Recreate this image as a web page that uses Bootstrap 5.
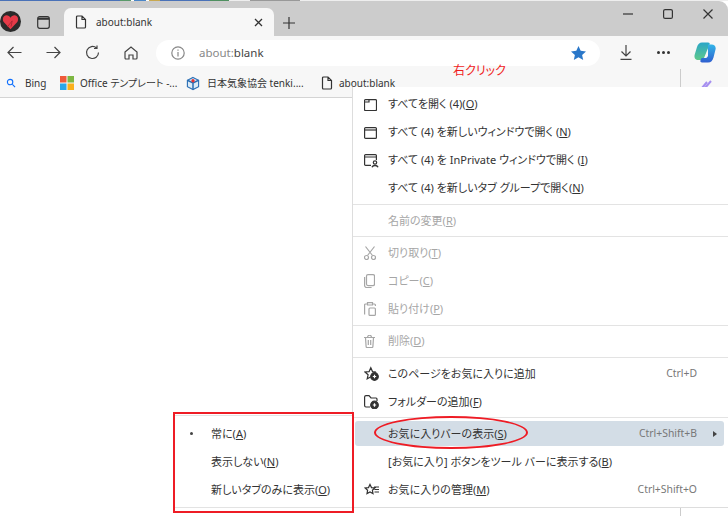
<!DOCTYPE html>
<html lang="ja">
<head>
  <meta charset="UTF-8" />
  <title>about:blank</title>
  <link href="https://cdn.jsdelivr.net/npm/bootstrap@5.3.0/dist/css/bootstrap.min.css" rel="stylesheet" />
  <style>
    html, body { width: 728px; height: 516px; overflow: hidden; background: #fff; }
    body { position: relative; font-family: "Noto Sans", "Noto Sans CJK JP", sans-serif; font-size: 11px; color: #333; font-feature-settings: "palt"; }
    svg { display: block; fill: none; stroke: currentColor; stroke-width: 1.2; }
    .strip { height: 1px; background: linear-gradient(90deg, #4a72b8 0 120px, #5a9a6a 120px 131px, #fff 131px 134px, #4a86c8 134px 146px, #fff 146px 149px, #c8a850 149px 160px, #4a72b8 160px 210px, #4f9060 210px 229px, #eee 229px 250px, #999 250px 300px, #eee 300px); }
    .titlebar { height: 35px; background: #ccc; border-top-right-radius: 9px; padding-top: 7px; }
    .avatar { width: 21px; height: 21px; margin-top: 3px; border-radius: 50%; background: #2b2b2b; }
    .tabtoggle { width: 43px; padding: 8px 0 0 2px; }
    .tabitem { width: 210px; height: 28px; background: #f7f7f7; border-radius: 7px 7px 0 0; padding: 0 11px; font-size: 10px; }
    .tabname { margin-left: 9px; }
    .tabplus { width: 30px; padding-top: 9px; }
    .winbtns { margin-top: 1px; }
    .winbtns span { width: 40px; }
    .toolbar { height: 33px; background: #f7f7f7; padding-left: 7px; color: #444; }
    .navbtn { width: 39px; }
    .navbtn.lastnav { width: 32px; }
    .addressbar { width: 444px; height: 26px; background: #fff; border-radius: 13px; padding: 0 14px 0 15px; color: #888; font-size: 11.5px; }
    .addressbar b { font-weight: 400; color: #444; }
    .addrtext { margin-left: 14px; }
    .dlbtn { width: 37px; margin-left: 20px; }
    .morebtn { width: 37px; gap: 2px; }
    .morebtn i { display: block; width: 3px; height: 3px; border-radius: 50%; background: #333; }
    .favbar { height: 29px; background: #f7f7f7; border-bottom: 1px solid #d4d4d4; padding-left: 6px; font-size: 10px; }
    .favitem { white-space: nowrap; }
    .favbing { width: 35px; margin-left: 9px; }
    .favoffice { width: 106px; margin-left: 6px; }
    .favtenki { width: 114px; margin-left: 7px; }
    .favblank { margin-left: 6px; }
    .sidepane { position: absolute; left: 680px; top: 69px; bottom: 0; width: 48px; border-left: 1px solid #ccc; padding: 10px 0 0 20px; color: #a68ff0; }
    .redlabel { position: absolute; left: 453px; top: 63px; color: #f01d1d; font-size: 12px; line-height: 16px; }
    .ctx { position: absolute; left: 352px; top: 87px; width: 376px; height: 421px; background: #fff; border-left: 1px solid #ddd; border-bottom: 1px solid #ddd; padding-top: 3px; }
    .ctxrow { height: 28px; padding: 1px 28px 0 11px; margin-right: 3px; white-space: nowrap; }
    .ctxicon { width: 24px; flex: none; }
    .ctxrow.off { color: #a6a6a6; }
    .ctxrow .keys { margin-left: auto; color: #777; font-size: 10.4px; }
    .ctxrow.hot { height: 25px; margin: 3px 4px 1.5px 2px; padding: 0 7px 0 9px; background: #d3dde6; border-radius: 3px; }
    .ctxrow.hot ~ .ctxrow { padding-top: 0; }
    .ctxline { height: 1px; background: #e3e3e3; margin: 2px 0 1.33px 0; }
    .ctxrow u { text-underline-offset: 1px; }
    .arrow { width: 0; height: 0; border-left: 4px solid #444; border-top: 3px solid transparent; border-bottom: 3px solid transparent; margin-left: 16px; }
    .submenu { position: absolute; left: 173px; top: 412px; width: 181px; height: 101px; border: 2px solid #ee1c25; padding: 1px 0; }
    .subinner { height: 93px; border-top: 1px solid #e3e3e3; border-bottom: 1px solid #e3e3e3; padding-top: 4px; background: #fff; }
    .submenu .ctxrow { padding: 0 0 0 36px; margin: 0; position: relative; }
    .dot { position: absolute; left: 15px; top: 12px; width: 3px; height: 3px; border-radius: 50%; background: #444; }
    .ringmark { position: absolute; left: 374px; top: 416px; width: 154px; height: 33px; border: 2px solid #ee1c25; border-radius: 50%; }
  </style>
</head>
<body>
  <div class="strip"></div>
  <div class="titlebar d-flex align-items-start">
    <div class="avatar d-flex align-items-center justify-content-center">
      <svg width="17" height="16" viewBox="0 0 15 14"><path d="M7.500 13.500 1.500 7C0 4.500 1 1 4 1c1.500 0 2.800 1 3.500 2.200C8.200 2 9.500 1 11 1c3 0 4 3.500 2.500 6Z" fill="#e63a48" stroke="none"/><path d="M5 11 9 6l-1 5" stroke="#a92633" stroke-width=".8"/></svg>
    </div>
    <div class="tabtoggle d-flex justify-content-center">
      <svg width="13" height="13" viewBox="0 0 13 13"><rect x=".7" y=".7" width="11.600" height="11.600" rx="2"/><path d="M1 2.700h11" stroke-width="2.200"/></svg>
    </div>
    <div class="tabitem d-flex align-items-center">
      <svg width="12" height="14" viewBox="0 0 12 14"><path d="M2.500 1h4.500l3.500 3.500v7.500a1 1 0 0 1-1 1h-7a1 1 0 0 1-1-1v-10a1 1 0 0 1 1-1ZM7 1v3.500h3.500"/></svg>
      <span class="tabname">about:blank</span>
      <svg class="ms-auto" width="9" height="9" viewBox="0 0 9 9"><path d="M1 1l7 7M8 1 1 8" stroke-width="1.300"/></svg>
    </div>
    <div class="tabplus d-flex justify-content-center">
      <svg width="12" height="12" viewBox="0 0 12 12"><path d="M6 0v12M0 6h12"/></svg>
    </div>
    <div class="winbtns d-flex ms-auto">
      <span class="d-flex justify-content-center"><svg width="10" height="10" viewBox="0 0 10 10"><path d="M0 5h10"/></svg></span>
      <span class="d-flex justify-content-center"><svg width="10" height="10" viewBox="0 0 10 10"><rect x=".6" y=".6" width="8.800" height="8.800" rx="1.500"/></svg></span>
      <span class="d-flex justify-content-center"><svg width="10" height="10" viewBox="0 0 10 10"><path d="M.5.500l9 9M9.500.500l-9 9"/></svg></span>
    </div>
  </div>

  <div class="toolbar d-flex align-items-center">
    <div class="navbtn"><svg width="15" height="13" viewBox="0 0 15 13"><path d="M14.500 6.500H1M6.500 1 1 6.500 6.500 12"/></svg></div>
    <div class="navbtn"><svg width="15" height="13" viewBox="0 0 15 13"><path d="M.5 6.500H14M8.500 1 14 6.500 8.500 12"/></svg></div>
    <div class="navbtn"><svg width="15" height="15" viewBox="0 0 15 15"><path d="M13.500 7.500a6 6 0 1 1-2-4.500M12 .5V3.500H9"/></svg></div>
    <div class="navbtn lastnav"><svg width="14" height="14" viewBox="0 0 14 14"><path d="M1 6 7 1l6 5v6a1 1 0 0 1-1 1H9V9H5v4H2a1 1 0 0 1-1-1Z"/></svg></div>
    <div class="addressbar d-flex align-items-center">
      <svg width="14" height="14" viewBox="0 0 14 14" stroke="#888"><circle cx="7" cy="7" r="6.200"/><path d="M7 6v4.500M7 3.500v1.200"/></svg>
      <span class="addrtext">about:<b>blank</b></span>
      <svg class="ms-auto" width="15" height="14" viewBox="0 0 15 14"><path d="M7.500 0l2.200 4.800 5.300.6-3.900 3.500 1.100 5.100-4.700-2.700L2.800 14l1.100-5.100L0 5.400l5.300-.6Z" fill="#2a77c9" stroke="none"/></svg>
    </div>
    <div class="dlbtn"><svg width="12" height="15" viewBox="0 0 12 15"><path d="M6 0v10.500M1.500 6.500 6 11l4.500-4.500M.5 14.300h11"/></svg></div>
    <div class="morebtn d-flex"><i></i><i></i><i></i></div>
    <svg width="22" height="21" viewBox="0 0 22 21">
      <defs>
        <linearGradient id="copa" x1="0" y1="0" x2="0" y2="1"><stop offset="0" stop-color="#2aa6c8"/><stop offset="1" stop-color="#5fc98a"/></linearGradient>
        <linearGradient id="copb" x1="0" y1="0" x2="0" y2="1"><stop offset="0" stop-color="#33b5e8"/><stop offset="1" stop-color="#2f5fd0"/></linearGradient>
      </defs>
      <path d="M8 .5h6c1.500 0 2 .8 1.500 2L10 16c-.6 1.500-1.500 2-3 2H4.500C1.500 18 0 16 .6 13L3 5C4 2 5.500.5 8 .5Z" fill="url(#copa)" stroke="none"/>
      <path d="M14 2.500h3.500c3 0 4.800 2 4 5l-2 8c-.8 3-2.500 5-5.500 5H8c-1.500 0-2-1-1.500-2.300L7.500 16h3.500c1.500 0 2.500-.8 3-2.300Z" fill="url(#copb)" stroke="none"/>
    </svg>
  </div>

  <div class="favbar d-flex align-items-center">
    <svg width="10" height="10" viewBox="0 0 11 11" class="text-primary" stroke-width="2"><circle cx="4.500" cy="4.500" r="3"/><path d="M7 7l3 3"/></svg>
    <span class="favitem favbing">Bing</span>
    <svg width="14" height="14" viewBox="0 0 14 14"><rect width="6.500" height="6.500" fill="#ef5a3a" stroke="none"/><rect x="7.500" width="6.500" height="6.500" fill="#7db742" stroke="none"/><rect y="7.500" width="6.500" height="6.500" fill="#2ba6ea" stroke="none"/><rect x="7.500" y="7.500" width="6.500" height="6.500" fill="#fab01c" stroke="none"/></svg>
    <span class="favitem favoffice">Office テンプレート -...</span>
    <svg width="14" height="15" viewBox="0 0 15 15"><path d="M7.500 1l6 3v7l-6 3-6-3V4Z" fill="#dcebf7" stroke="#2b6fb5"/><path d="M1.500 4l6 3 6-3M7.500 7v7" stroke="#2b6fb5" stroke-width="1.600"/><circle cx="7.500" cy="4.500" r="1.800" fill="#e23333" stroke="none"/></svg>
    <span class="favitem favtenki">日本気象協会 tenki....</span>
    <svg width="12" height="14" viewBox="0 0 12 14"><path d="M2.500 1h4.500l3.500 3.500v7.500a1 1 0 0 1-1 1h-7a1 1 0 0 1-1-1v-10a1 1 0 0 1 1-1ZM7 1v3.500h3.500"/></svg>
    <span class="favitem favblank">about:blank</span>
  </div>

  <div class="sidepane">
    <svg width="11" height="10" viewBox="0 0 11 10"><path d="M1 9 6 3M4 9l6-7" stroke-width="2"/></svg>
  </div>

  <div class="redlabel">右クリック</div>

  <div class="ctx">
    <div class="ctxrow d-flex align-items-center"><span class="ctxicon"><svg width="13" height="12" viewBox="0 0 13 12"><path d="M1.500.6h10a1 1 0 0 1 1 1v9a1 1 0 0 1-1 1h-10a1 1 0 0 1-1-1v-9a1 1 0 0 1 1-1ZM.6 3h4.400V.6"/></svg></span>すべてを開く (4)(<u>O</u>)</div>
    <div class="ctxrow d-flex align-items-center"><span class="ctxicon"><svg width="13" height="12" viewBox="0 0 13 12"><rect x=".6" y=".6" width="11.800" height="10.800" rx="1"/><path d="M.6 3h11.800"/></svg></span>すべて (4) を新しいウィンドウで開く (<u>N</u>)</div>
    <div class="ctxrow d-flex align-items-center"><span class="ctxicon"><svg width="15" height="14" viewBox="0 0 15 14"><path d="M7 11.400H1.600a1 1 0 0 1-1-1V1.600a1 1 0 0 1 1-1h9.800a1 1 0 0 1 1 1V6M.6 3h11.800"/><circle cx="11" cy="8.500" r="1.700"/><path d="M8 13.300c1-2.400 5-2.400 6 0" stroke-width="1.500"/></svg></span>すべて (4) を InPrivate ウィンドウで開く (<u>I</u>)</div>
    <div class="ctxrow d-flex align-items-center"><span class="ctxicon"></span>すべて (4) を新しいタブ グループで開く(<u>N</u>)</div>
    <div class="ctxline"></div>
    <div class="ctxrow off d-flex align-items-center"><span class="ctxicon"></span>名前の変更(<u>R</u>)</div>
    <div class="ctxline"></div>
    <div class="ctxrow off d-flex align-items-center"><span class="ctxicon"><svg width="12" height="14" viewBox="0 0 12 14"><path d="M1.500.5l7 9M10.500.5l-7 9"/><circle cx="2.500" cy="11.500" r="2"/><circle cx="9.500" cy="11.500" r="2"/></svg></span>切り取り(<u>T</u>)</div>
    <div class="ctxrow off d-flex align-items-center"><span class="ctxicon"><svg width="11" height="14" viewBox="0 0 11 14"><rect x="2.500" y=".6" width="8" height="11" rx="1.500"/><path d="M.6 3v8.500a2 2 0 0 0 2 2h5"/></svg></span>コピー(<u>C</u>)</div>
    <div class="ctxrow off d-flex align-items-center"><span class="ctxicon"><svg width="12" height="14" viewBox="0 0 12 14"><path d="M3 2H1.600a1 1 0 0 0-1 1v9.400M9 2h1.400a1 1 0 0 1 1 1v1M3.500.6h5v2.400h-5Z"/><rect x="5" y="6" width="6.400" height="7.400" rx="1"/></svg></span>貼り付け(<u>P</u>)</div>
    <div class="ctxline"></div>
    <div class="ctxrow off d-flex align-items-center"><span class="ctxicon"><svg width="11" height="13" viewBox="0 0 11 13"><path d="M0 2.500h11M3.500 2.500c0-3 4-3 4 0M1.500 2.500l.6 9a1 1 0 0 0 1 1h4.800a1 1 0 0 0 1-1l.6-9M4.300 5v5M6.700 5v5"/></svg></span>削除(<u>D</u>)</div>
    <div class="ctxline"></div>
    <div class="ctxrow d-flex align-items-center"><span class="ctxicon"><svg width="15" height="15" viewBox="0 0 15 15"><path d="M6.500 11 3.200 12.800l.9-4L1 6l4.100-.4L6.800 1.800l1.700 3.800 3.500.4"/><circle cx="10.500" cy="10.500" r="3.800" fill="currentColor"/><path d="M10.500 8.800v3.400M8.800 10.500h3.400" stroke="#fff"/></svg></span>このページをお気に入りに追加<span class="keys">Ctrl+D</span></div>
    <div class="ctxrow d-flex align-items-center"><span class="ctxicon"><svg width="15" height="14" viewBox="0 0 15 14"><path d="M6 12H2a1.500 1.500 0 0 1-1.400-1.500V2A1.500 1.500 0 0 1 2 .6h3L7 3h5a1.500 1.500 0 0 1 1 1v2"/><circle cx="10.500" cy="10" r="3.800" fill="currentColor"/><path d="M10.500 8.300v3.400M8.800 10h3.400" stroke="#fff"/></svg></span>フォルダーの追加(<u>F</u>)</div>
    <div class="ctxline"></div>
    <div class="ctxrow hot d-flex align-items-center"><span class="ctxicon"></span>お気に入りバーの表示(<u>S</u>)<span class="keys">Ctrl+Shift+B</span><span class="arrow"></span></div>
    <div class="ctxrow d-flex align-items-center"><span class="ctxicon"></span>[お気に入り] ボタンをツール バーに表示する(<u>B</u>)</div>
    <div class="ctxrow d-flex align-items-center"><span class="ctxicon"><svg width="15" height="13" viewBox="0 0 15 13"><path d="M6 1.500 7.500 4.600l3.300.4-2.400 2.300.6 3.300L6 9l-3 1.600.6-3.300L1.200 5l3.300-.4ZM10.500 6.500H15M10.500 9H15M10 4h5"/></svg></span>お気に入りの管理(<u>M</u>)<span class="keys">Ctrl+Shift+O</span></div>
  </div>

  <div class="submenu">
    <div class="subinner">
      <div class="ctxrow d-flex align-items-center"><span class="dot"></span>常に(<u>A</u>)</div>
      <div class="ctxrow d-flex align-items-center">表示しない(<u>N</u>)</div>
      <div class="ctxrow d-flex align-items-center">新しいタブのみに表示(<u>O</u>)</div>
    </div>
  </div>
  <div class="ringmark"></div>

  <script src="https://cdn.jsdelivr.net/npm/bootstrap@5.3.0/dist/js/bootstrap.bundle.min.js"></script>
</body>
</html>
